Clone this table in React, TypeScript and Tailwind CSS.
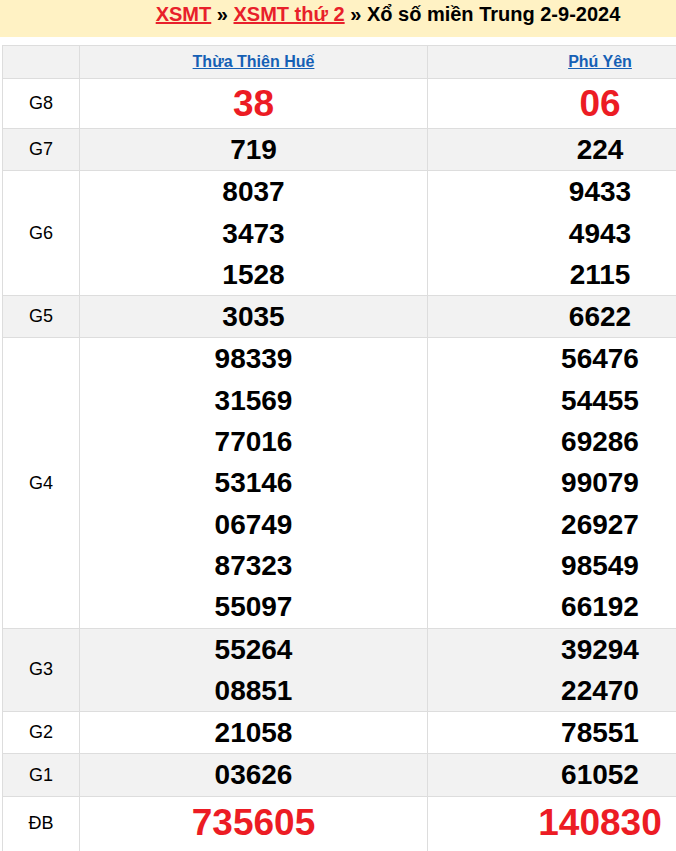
import React from "react";

type Row = {
  label: string;
  left: string[];
  right: string[];
  gray?: boolean;
  big?: boolean;
  tall?: boolean;
};

const rows: Row[] = [
  { label: "G8", left: ["38"], right: ["06"], big: true },
  { label: "G7", left: ["719"], right: ["224"], gray: true },
  { label: "G6", left: ["8037", "3473", "1528"], right: ["9433", "4943", "2115"] },
  { label: "G5", left: ["3035"], right: ["6622"], gray: true },
  {
    label: "G4",
    left: ["98339", "31569", "77016", "53146", "06749", "87323", "55097"],
    right: ["56476", "54455", "69286", "99079", "26927", "98549", "66192"],
  },
  { label: "G3", left: ["55264", "08851"], right: ["39294", "22470"], gray: true },
  { label: "G2", left: ["21058"], right: ["78551"] },
  { label: "G1", left: ["03626"], right: ["61052"], gray: true },
  { label: "ĐB", left: ["735605"], right: ["140830"], big: true, tall: true },
];

export default function App() {
  return (
    <div className="w-[676px] h-[851px] overflow-hidden bg-white" style={{ fontFamily: '"Liberation Sans", Arial, sans-serif' }}>
      <div className="w-[776px]">
        <div className="h-[37px] bg-[#fff2c4] text-center text-[20px] font-bold leading-[28px] text-black">
          <a href="#" className="text-[#e8202a] underline">XSMT</a>
          {" » "}
          <a href="#" className="text-[#e8202a] underline">XSMT thứ 2</a>
          {" » Xổ số miền Trung 2-9-2024"}
        </div>

        <table className="mt-[8px] ml-[2px] w-[770px] table-fixed border-collapse border border-[#dddddd]">
          <colgroup>
            <col className="w-[77px]" />
            <col className="w-[348px]" />
            <col className="w-[345px]" />
          </colgroup>
          <thead>
            <tr className="h-[33px] bg-[#f2f2f2]">
              <th className="border border-[#dddddd]"></th>
              <th className="border border-[#dddddd] text-[16px] font-bold">
                <a href="#" className="text-[#1560b5] underline">Thừa Thiên Huế</a>
              </th>
              <th className="border border-[#dddddd] text-[16px] font-bold">
                <a href="#" className="text-[#1560b5] underline">Phú Yên</a>
              </th>
            </tr>
          </thead>
          <tbody>
            {rows.map((r) => (
              <tr key={r.label} className={r.gray ? "bg-[#f2f2f2]" : "bg-white"}>
                <td className={"border border-[#dddddd] p-0 text-center text-[18px] text-black " + (r.tall ? "pb-[8px]" : "")}>{r.label}</td>
                <Numbers values={r.left} big={r.big} tall={r.tall} />
                <Numbers values={r.right} big={r.big} tall={r.tall} />
              </tr>
            ))}
          </tbody>
        </table>
      </div>
    </div>
  );
}

function Numbers({ values, big, tall }: { values: string[]; big?: boolean; tall?: boolean }) {
  return (
    <td className={"border border-[#dddddd] p-0 text-center " + (tall ? "pb-[10px]" : "")}>
      {values.map((v, i) =>
        big ? (
          <div key={i} className={"text-[37px] font-bold text-[#ec1c24] " + (tall ? "leading-[52px]" : "leading-[49px]")}>{v}</div>
        ) : (
          <div key={i} className="text-[28px] font-bold leading-[41.3px] text-black">{v}</div>
        )
      )}
    </td>
  );
}
